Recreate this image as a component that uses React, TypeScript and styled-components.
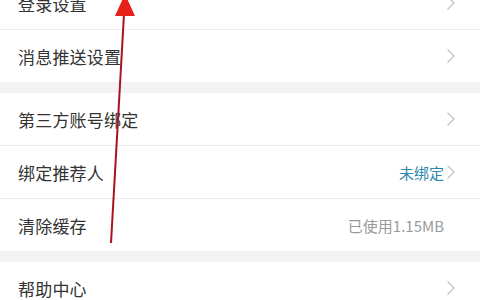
import React from "react";
import styled, { createGlobalStyle } from "styled-components";

const GlobalStyle = createGlobalStyle`
  html, body {
    margin: 0;
    padding: 0;
    background: #ffffff;
    overflow: hidden;
  }
  body {
    font-family: "Noto Sans CJK SC", "Noto Sans", sans-serif;
  }
`;

const Screen = styled.div`
  position: relative;
  width: 480px;
  height: 300px;
  overflow: hidden;
  background: #ffffff;
`;

const List = styled.div`
  display: flex;
  flex-direction: column;
  margin-top: -23px;
`;

const Group = styled.div`
  display: flex;
  flex-direction: column;
  background: #ffffff;
`;

const Spacer = styled.div`
  height: 11px;
  background: #f3f3f3;
`;

const Row = styled.div<{ $last?: boolean }>`
  display: flex;
  align-items: center;
  height: 52px;
  padding: 0 24px 0 18px;
  border-bottom: ${(p) => (p.$last ? "none" : "1px solid #eeeeee")};
`;

const Label = styled.span`
  flex: 1;
  font-size: 17px;
  color: #333333;
  letter-spacing: 0.2px;
`;

const Value = styled.span<{ $tone: "blue" | "gray" }>`
  font-size: 15px;
  color: ${(p) => (p.$tone === "blue" ? "#2b87ad" : "#9a9a9a")};
  margin-right: ${(p) => (p.$tone === "blue" ? "2px" : "12px")};
`;

const ChevronBox = styled.span`
  display: flex;
  align-items: center;
  width: 10px;
  height: 16px;
`;

const Overlay = styled.svg`
  position: absolute;
  left: 0;
  top: 0;
  pointer-events: none;
`;

type Item = {
  label: string;
  value?: string;
  tone?: "blue" | "gray";
  chevron?: boolean;
};

const groups: Item[][] = [
  [
    { label: "登录设置", chevron: true },
    { label: "消息推送设置", chevron: true }
  ],
  [
    { label: "第三方账号绑定", chevron: true },
    { label: "绑定推荐人", value: "未绑定", tone: "blue", chevron: true },
    { label: "清除缓存", value: "已使用1.15MB", tone: "gray", chevron: false }
  ],
  [{ label: "帮助中心", chevron: true }]
];

function Chevron(): JSX.Element {
  return (
    <ChevronBox>
      <svg width="10" height="16" viewBox="0 0 10 16">
        <path
          d="M2 2 L8 8 L2 14"
          fill="none"
          stroke="#c4c4c4"
          strokeWidth="1.4"
          strokeLinecap="round"
          strokeLinejoin="round"
        />
      </svg>
    </ChevronBox>
  );
}

export default function App(): JSX.Element {
  return (
    <>
      <GlobalStyle />
      <Screen>
        <List>
          {groups.map((items, gi) => (
            <React.Fragment key={gi}>
              {gi > 0 && <Spacer />}
              <Group>
                {items.map((item, ii) => (
                  <Row key={item.label} $last={ii === items.length - 1}>
                    <Label>{item.label}</Label>
                    {item.value && (
                      <Value $tone={item.tone ?? "gray"}>{item.value}</Value>
                    )}
                    {item.chevron && <Chevron />}
                  </Row>
                ))}
              </Group>
            </React.Fragment>
          ))}
        </List>
        <Overlay width="480" height="300" viewBox="0 0 480 300">
          <line
            x1="124"
            y1="14"
            x2="111"
            y2="243"
            stroke="#a8141c"
            strokeWidth="2"
          />
          <polygon points="125,-6 115,16 135,16" fill="#e8201a" />
        </Overlay>
      </Screen>
    </>
  );
}
